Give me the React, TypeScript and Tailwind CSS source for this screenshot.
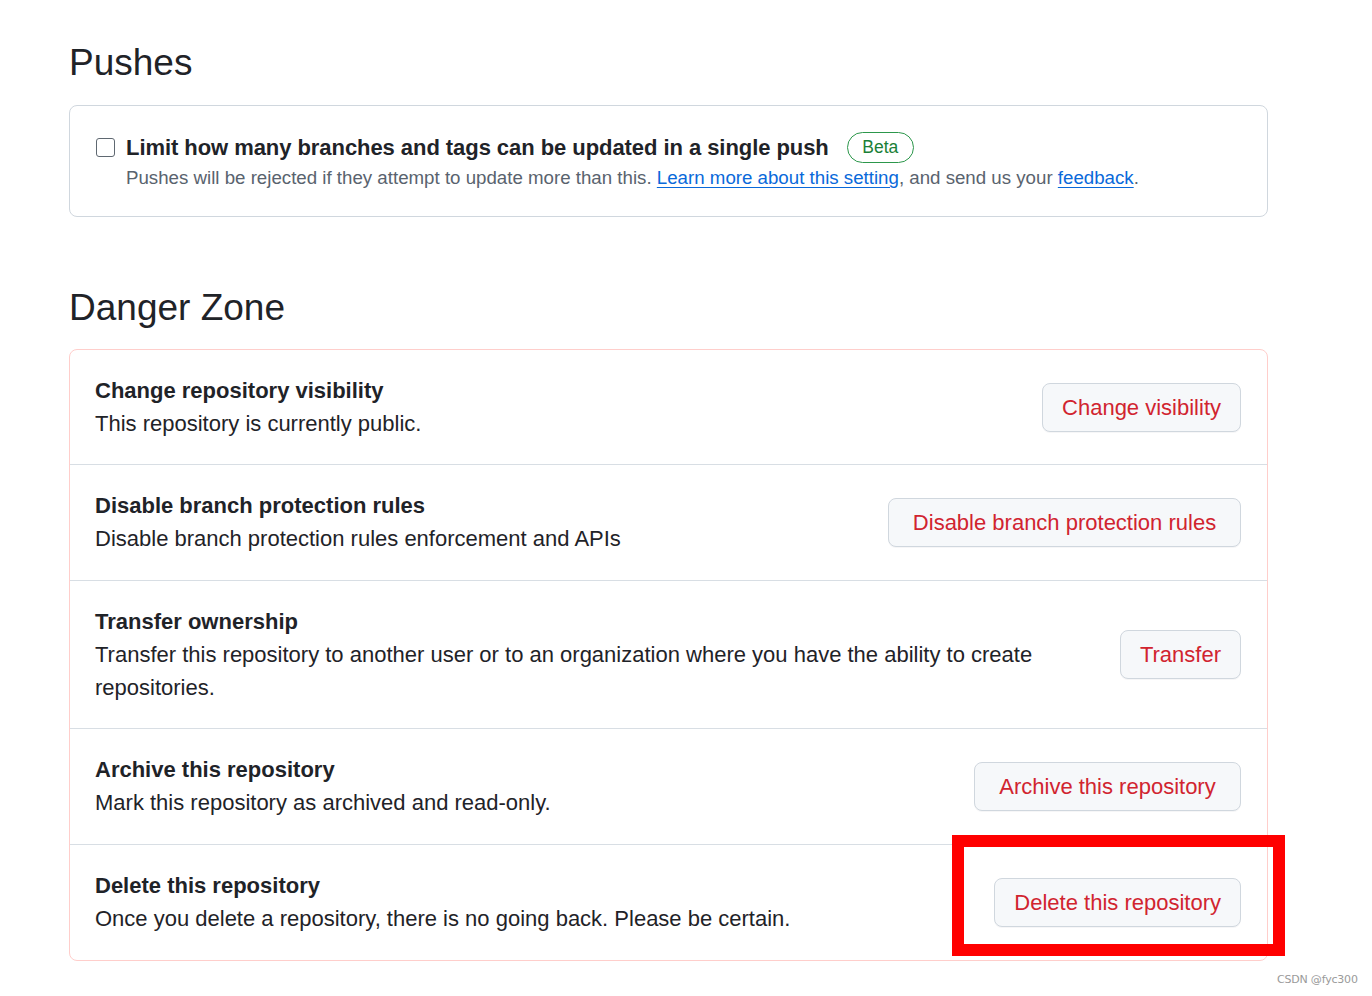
import React from "react";

const rows: { title: string; desc: string; button: string; w: string; pb: string }[] = [
  {
    title: "Change repository visibility",
    desc: "This repository is currently public.",
    button: "Change visibility",
    w: "px-[19px]",
    pb: "pb-6",
  },
  {
    title: "Disable branch protection rules",
    desc: "Disable branch protection rules enforcement and APIs",
    button: "Disable branch protection rules",
    w: "w-[353px]",
    pb: "pb-[25px]",
  },
  {
    title: "Transfer ownership",
    desc: "Transfer this repository to another user or to an organization where you have the ability to create repositories.",
    button: "Transfer",
    w: "px-[19px]",
    pb: "pb-6",
  },
  {
    title: "Archive this repository",
    desc: "Mark this repository as archived and read-only.",
    button: "Archive this repository",
    w: "w-[267px]",
    pb: "pb-[25px]",
  },
  {
    title: "Delete this repository",
    desc: "Once you delete a repository, there is no going back. Please be certain.",
    button: "Delete this repository",
    w: "px-[19px]",
    pb: "pb-[25px]",
  },
];

export default function App() {
  return (
    <div className="relative w-[1372px] h-[996px] overflow-hidden bg-white font-['Liberation_Sans',Arial,sans-serif] text-[#1f2328]">
      <div className="pl-[69px] pt-10 w-[1268px]">
        <h2 className="text-[37px] leading-[46px] font-normal mb-[19px]">Pushes</h2>
        <div className="border border-[#d0d7de] rounded-[8px] pl-[26px] pr-6 pt-6 pb-6">
          <div className="flex items-center h-[34px]">
            <span className="w-[19px] h-[19px] border-[1.5px] border-[#5f6871] rounded-[3px] bg-white shrink-0" />
            <span className="ml-[11px] text-[22px] font-bold leading-[33px] tracking-[-0.06px]">
              Limit how many branches and tags can be updated in a single push
            </span>
            <span className="ml-[18px] h-[31px] w-[67px] flex items-center justify-center border-[1.5px] border-[#2c974b] rounded-full text-[17.5px] text-[#1a7f37]">
              Beta
            </span>
          </div>
          <p className="pl-[30px] text-[18.7px] leading-[28px] text-[#59636e]">
            Pushes will be rejected if they attempt to update more than this.{" "}
            <a className="text-[#0969da] underline underline-offset-[3px]">Learn more about this setting</a>, and
            send us your <a className="text-[#0969da] underline underline-offset-[3px]">feedback</a>.
          </p>
        </div>

        <h2 className="mt-[68px] text-[37px] leading-[46px] font-normal mb-[18px]">Danger Zone</h2>
        <div className="border border-[#ffcecb] rounded-[8px]">
          {rows.map((r, i) => (
            <div
              key={r.title}
              className={`flex items-center justify-between gap-6 pl-[25px] pr-[26px] pt-6 ${r.pb} ${
                i > 0 ? "border-t border-[#d8dee4]" : ""
              }`}
            >
              <div className="flex-1 min-w-0">
                <div className="text-[22px] font-bold leading-[33px]">{r.title}</div>
                <div className="text-[22px] leading-[33px]">{r.desc}</div>
              </div>
              <button
                className={`shrink-0 h-[49px] ${r.w} border border-[#d0d7de] rounded-lg bg-[#f6f8fa] text-[22px] text-[#d1242f] shadow-[0_1px_0_rgba(31,35,40,0.04)]`}
              >
                {r.button}
              </button>
            </div>
          ))}
        </div>
      </div>

      <div className="absolute left-[952px] top-[835px] w-[333px] h-[121px] border-[12px] border-[#ff0000]" />
      <div className="absolute left-[1277px] top-[972px] text-[11px] leading-[16px] text-[#9a9a9a] font-['DejaVu_Sans',sans-serif] tracking-[-0.2px]">
        CSDN @fyc300
      </div>
    </div>
  );
}
